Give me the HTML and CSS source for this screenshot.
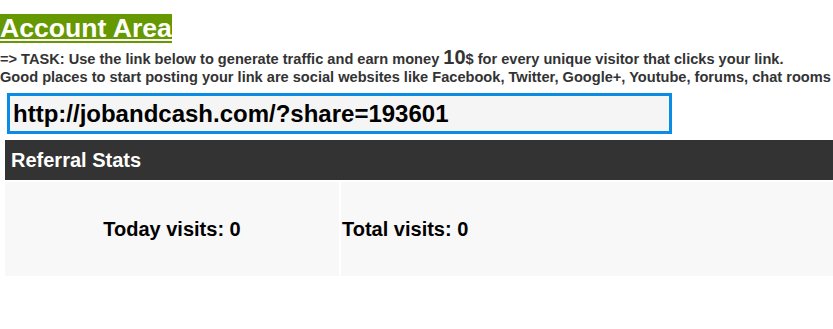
FILE: index.html
```html
<!DOCTYPE html>
<html lang="en">
<head>
    <meta charset="UTF-8">
    <title>Account Area</title>
    <link rel="stylesheet" href="styles.css">
</head>
<body>
    <h1 class="area-title">Account Area</h1>
    <p class="task">=&gt; TASK: Use the link below to generate traffic and earn money <span class="amount">10</span>$ for every unique visitor that clicks your link.<br>
    Good places to start posting your link are social websites like Facebook, Twitter, Google+, Youtube, forums, chat rooms</p>

    <input type="text" class="share-link" value="http://jobandcash.com/?share=193601" readonly>

    <table class="stats">
        <tr>
            <th colspan="2">Referral Stats</th>
        </tr>
        <tr>
            <td class="today">Today visits: 0</td>
            <td class="total">Total visits: 0</td>
        </tr>
    </table>
</body>
</html>
```

FILE: styles.css
```css
body {
    margin: 0;
    font-family: "Liberation Sans", Arial, sans-serif;
    background: #fff;
    overflow: hidden;
}

.area-title {
    display: inline-block;
    margin: 14px 0 0 0;
    background-color: #669900;
    color: #fff;
    font-size: 26.6px;
    line-height: 29px;
    text-decoration: underline;
}

.task {
    margin: 7px 0 0 0;
    font-size: 14.6px;
    font-weight: bold;
    line-height: 18px;
    color: #333;
    white-space: nowrap;
}

.task .amount {
    font-size: 20px;
    line-height: 0;
}

.share-link {
    display: block;
    box-sizing: border-box;
    width: 665px;
    height: 41px;
    margin: 7px 0 0 7px;
    padding: 0 3px;
    border: 3px solid #0a8be4;
    background-color: #f5f5f5;
    font-family: "Liberation Sans", Arial, sans-serif;
    font-size: 24px;
    font-weight: bold;
    color: #000;
    outline: none;
}

.stats {
    width: 832px;
    margin: 4px 0 0 3px;
    border-spacing: 2px;
}

.stats th {
    height: 40px;
    padding: 0 6px;
    background-color: #333;
    color: #fff;
    font-size: 20px;
    text-align: left;
}

.stats td {
    height: 94px;
    padding: 0;
    background-color: #f8f8f8;
    font-size: 20px;
    font-weight: bold;
    color: #000;
}

.stats .today {
    width: 334px;
    text-align: center;
}

.stats .total {
    padding-left: 1px;
    text-align: left;
}
```
